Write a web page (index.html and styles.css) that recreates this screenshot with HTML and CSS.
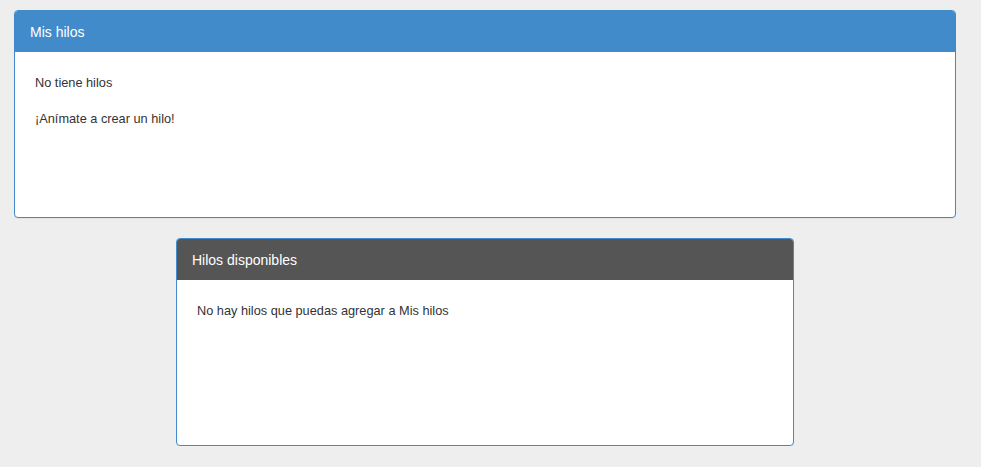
FILE: index.html
```html
<!DOCTYPE html>
<html lang="es">
<head>
<meta charset="utf-8">
<title>Hilos</title>
<link rel="stylesheet" href="styles.css">
</head>
<body>
<div class="page">
  <section class="panel panel-wide">
    <div class="panel-heading heading-blue">
      <h3 class="panel-title">Mis hilos</h3>
    </div>
    <div class="panel-body">
      <p>No tiene hilos</p>
      <p>¡Anímate a crear un hilo!</p>
    </div>
  </section>
  <section class="panel panel-narrow">
    <div class="panel-heading heading-dark">
      <h3 class="panel-title">Hilos disponibles</h3>
    </div>
    <div class="panel-body">
      <p>No hay hilos que puedas agregar a Mis hilos</p>
    </div>
  </section>
</div>
</body>
</html>
```
FILE: styles.css
```css
html, body {
  margin: 0;
  padding: 0;
  background: #eeeeee;
}
body {
  font-family: "Liberation Sans", Arial, Helvetica, sans-serif;
  font-size: 12.75px;
  line-height: 18px;
  color: #333333;
}
.page {
  width: 942px;
  margin-left: 14px;
  padding-top: 10px;
  display: flex;
  flex-direction: column;
  align-items: center;
  gap: 20px;
}
.panel {
  box-sizing: border-box;
  height: 208px;
  background: #ffffff;
  border: 1px solid #428bca;
  border-radius: 4px;
  box-shadow: 0 1px 1px rgba(0,0,0,0.05);
  display: flex;
  flex-direction: column;
}
.panel-wide { width: 942px; }
.panel-narrow { width: 618px; }
.panel-heading {
  padding: 11px 15px 9px;
  border-top-left-radius: 3px;
  border-top-right-radius: 3px;
  color: #ffffff;
}
.heading-blue {
  background: #428bca;
  border-bottom: 1px solid #428bca;
}
.heading-dark {
  background: #555555;
  border-bottom: 1px solid #555555;
}
.panel-title {
  margin: 0;
  font-size: 14px;
  font-weight: normal;
  line-height: 20px;
}
.panel-body {
  padding: 22px 20px 20px;
}
.panel-body p {
  margin: 0 0 18px;
}
```
